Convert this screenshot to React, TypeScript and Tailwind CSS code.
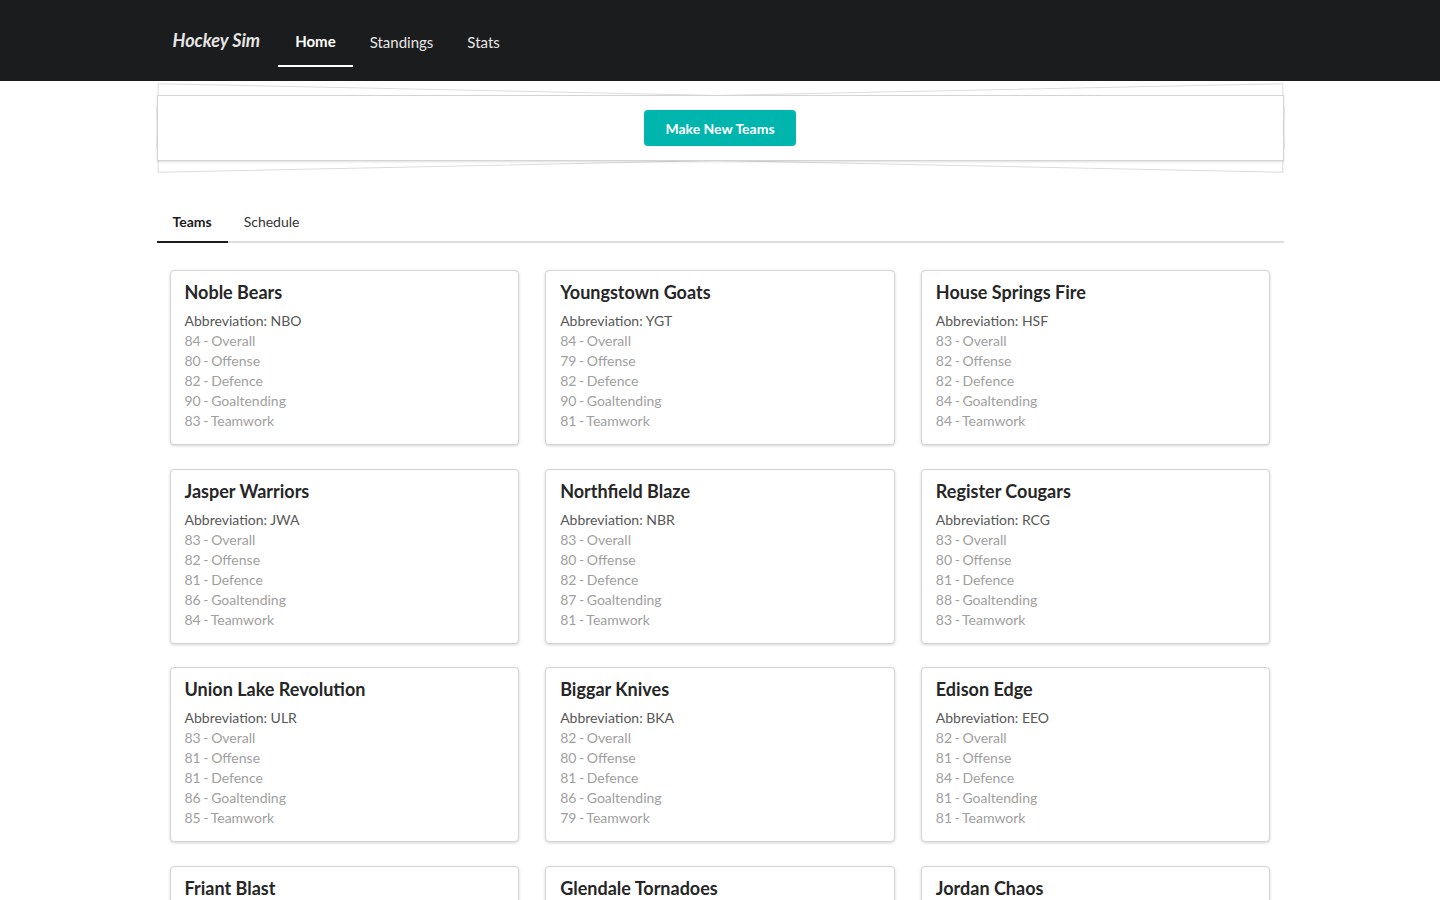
import React from 'react';

type Team = {
  name: string;
  abbr: string;
  overall: number;
  offense: number;
  defence: number;
  goaltending: number;
  teamwork: number;
};

const teams: Team[] = [
  { name: 'Noble Bears', abbr: 'NBO', overall: 84, offense: 80, defence: 82, goaltending: 90, teamwork: 83 },
  { name: 'Youngstown Goats', abbr: 'YGT', overall: 84, offense: 79, defence: 82, goaltending: 90, teamwork: 81 },
  { name: 'House Springs Fire', abbr: 'HSF', overall: 83, offense: 82, defence: 82, goaltending: 84, teamwork: 84 },
  { name: 'Jasper Warriors', abbr: 'JWA', overall: 83, offense: 82, defence: 81, goaltending: 86, teamwork: 84 },
  { name: 'Northfield Blaze', abbr: 'NBR', overall: 83, offense: 80, defence: 82, goaltending: 87, teamwork: 81 },
  { name: 'Register Cougars', abbr: 'RCG', overall: 83, offense: 80, defence: 81, goaltending: 88, teamwork: 83 },
  { name: 'Union Lake Revolution', abbr: 'ULR', overall: 83, offense: 81, defence: 81, goaltending: 86, teamwork: 85 },
  { name: 'Biggar Knives', abbr: 'BKA', overall: 82, offense: 80, defence: 81, goaltending: 86, teamwork: 79 },
  { name: 'Edison Edge', abbr: 'EEO', overall: 82, offense: 81, defence: 84, goaltending: 81, teamwork: 81 },
  { name: 'Friant Blast', abbr: 'FBL', overall: 82, offense: 79, defence: 80, goaltending: 85, teamwork: 82 },
  { name: 'Glendale Tornadoes', abbr: 'GTO', overall: 81, offense: 80, defence: 79, goaltending: 84, teamwork: 80 },
  { name: 'Jordan Chaos', abbr: 'JCH', overall: 81, offense: 78, defence: 80, goaltending: 83, teamwork: 82 },
];

function TeamCard({ team }: { team: Team }) {
  const stats: [number, string][] = [
    [team.overall, 'Overall'],
    [team.offense, 'Offense'],
    [team.defence, 'Defence'],
    [team.goaltending, 'Goaltending'],
    [team.teamwork, 'Teamwork'],
  ];
  return (
    <div className="bg-white border border-[#d4d4d5] rounded-[4px] shadow-[0_1px_3px_0_#d4d4d5] px-[14px] pt-[10px] pb-[13px]">
      <div className="text-[18px] leading-[23px] font-bold text-[#262626]">{team.name}</div>
      <div className="mt-[7px] text-[14px] leading-[20px] text-[#575757]">Abbreviation: {team.abbr}</div>
      {stats.map(([value, label]) => (
        <div key={label} className="text-[14px] leading-[20px] text-[#a0a0a0] [word-spacing:-1px]">
          {value} - {label}
        </div>
      ))}
    </div>
  );
}

export default function App() {
  return (
    <div className="min-h-screen bg-white font-['Lato','Liberation_Sans',sans-serif] text-[14px] text-[#222]">
      {/* Top menu */}
      <div className="h-[81px] bg-[#1b1c1d] pt-[17px]">
        <div className="w-[1127px] mx-auto flex h-[50px] text-[15px]">
          <div className="flex items-center pl-[16px] pr-[18px] text-[18px] font-bold italic text-[#e6e6e6] pb-[3px]">Hockey Sim</div>
          <div className="flex items-center px-[17px] font-bold text-white border-b-2 border-white">Home</div>
          <div className="flex items-center px-[17px] text-[#e6e6e6]">Standings</div>
          <div className="flex items-center px-[17px] text-[#e6e6e6]">Stats</div>
        </div>
      </div>

      <div className="w-[1127px] mx-auto">
        {/* Piled segment */}
        <div className="relative mt-[14px] isolate">
          <div className="absolute inset-0 bg-white border border-[#dcdcdc] rotate-[-1.2deg] -z-20" />
          <div className="absolute inset-0 bg-white border border-[#dcdcdc] rotate-[1.2deg] -z-10" />
          <div className="relative bg-white border border-[#d4d4d5] shadow-[0_1px_2px_0_rgba(34,36,38,0.15)] p-[14px] flex justify-center">
            <button className="h-[36px] px-[21px] rounded-[4px] bg-[#00b5ad] text-white font-bold text-[14px]">
              Make New Teams
            </button>
          </div>
        </div>

        {/* Tabs */}
        <div className="mt-[42px] flex border-b-2 border-[#dedede]">
          <div className="px-[16px] py-[12px] leading-[14px] font-bold text-[#1b1c1d] border-b-2 border-[#1b1c1d] -mb-[2px]">Teams</div>
          <div className="px-[16px] py-[12px] leading-[14px] text-[#333]">Schedule</div>
        </div>

        {/* Cards */}
        <div className="px-[13px] pt-[27px] pb-[40px] grid grid-cols-3 gap-x-[26px] gap-y-[23.6px]">
          {teams.map((t) => (
            <TeamCard key={t.name} team={t} />
          ))}
        </div>
      </div>
    </div>
  );
}
